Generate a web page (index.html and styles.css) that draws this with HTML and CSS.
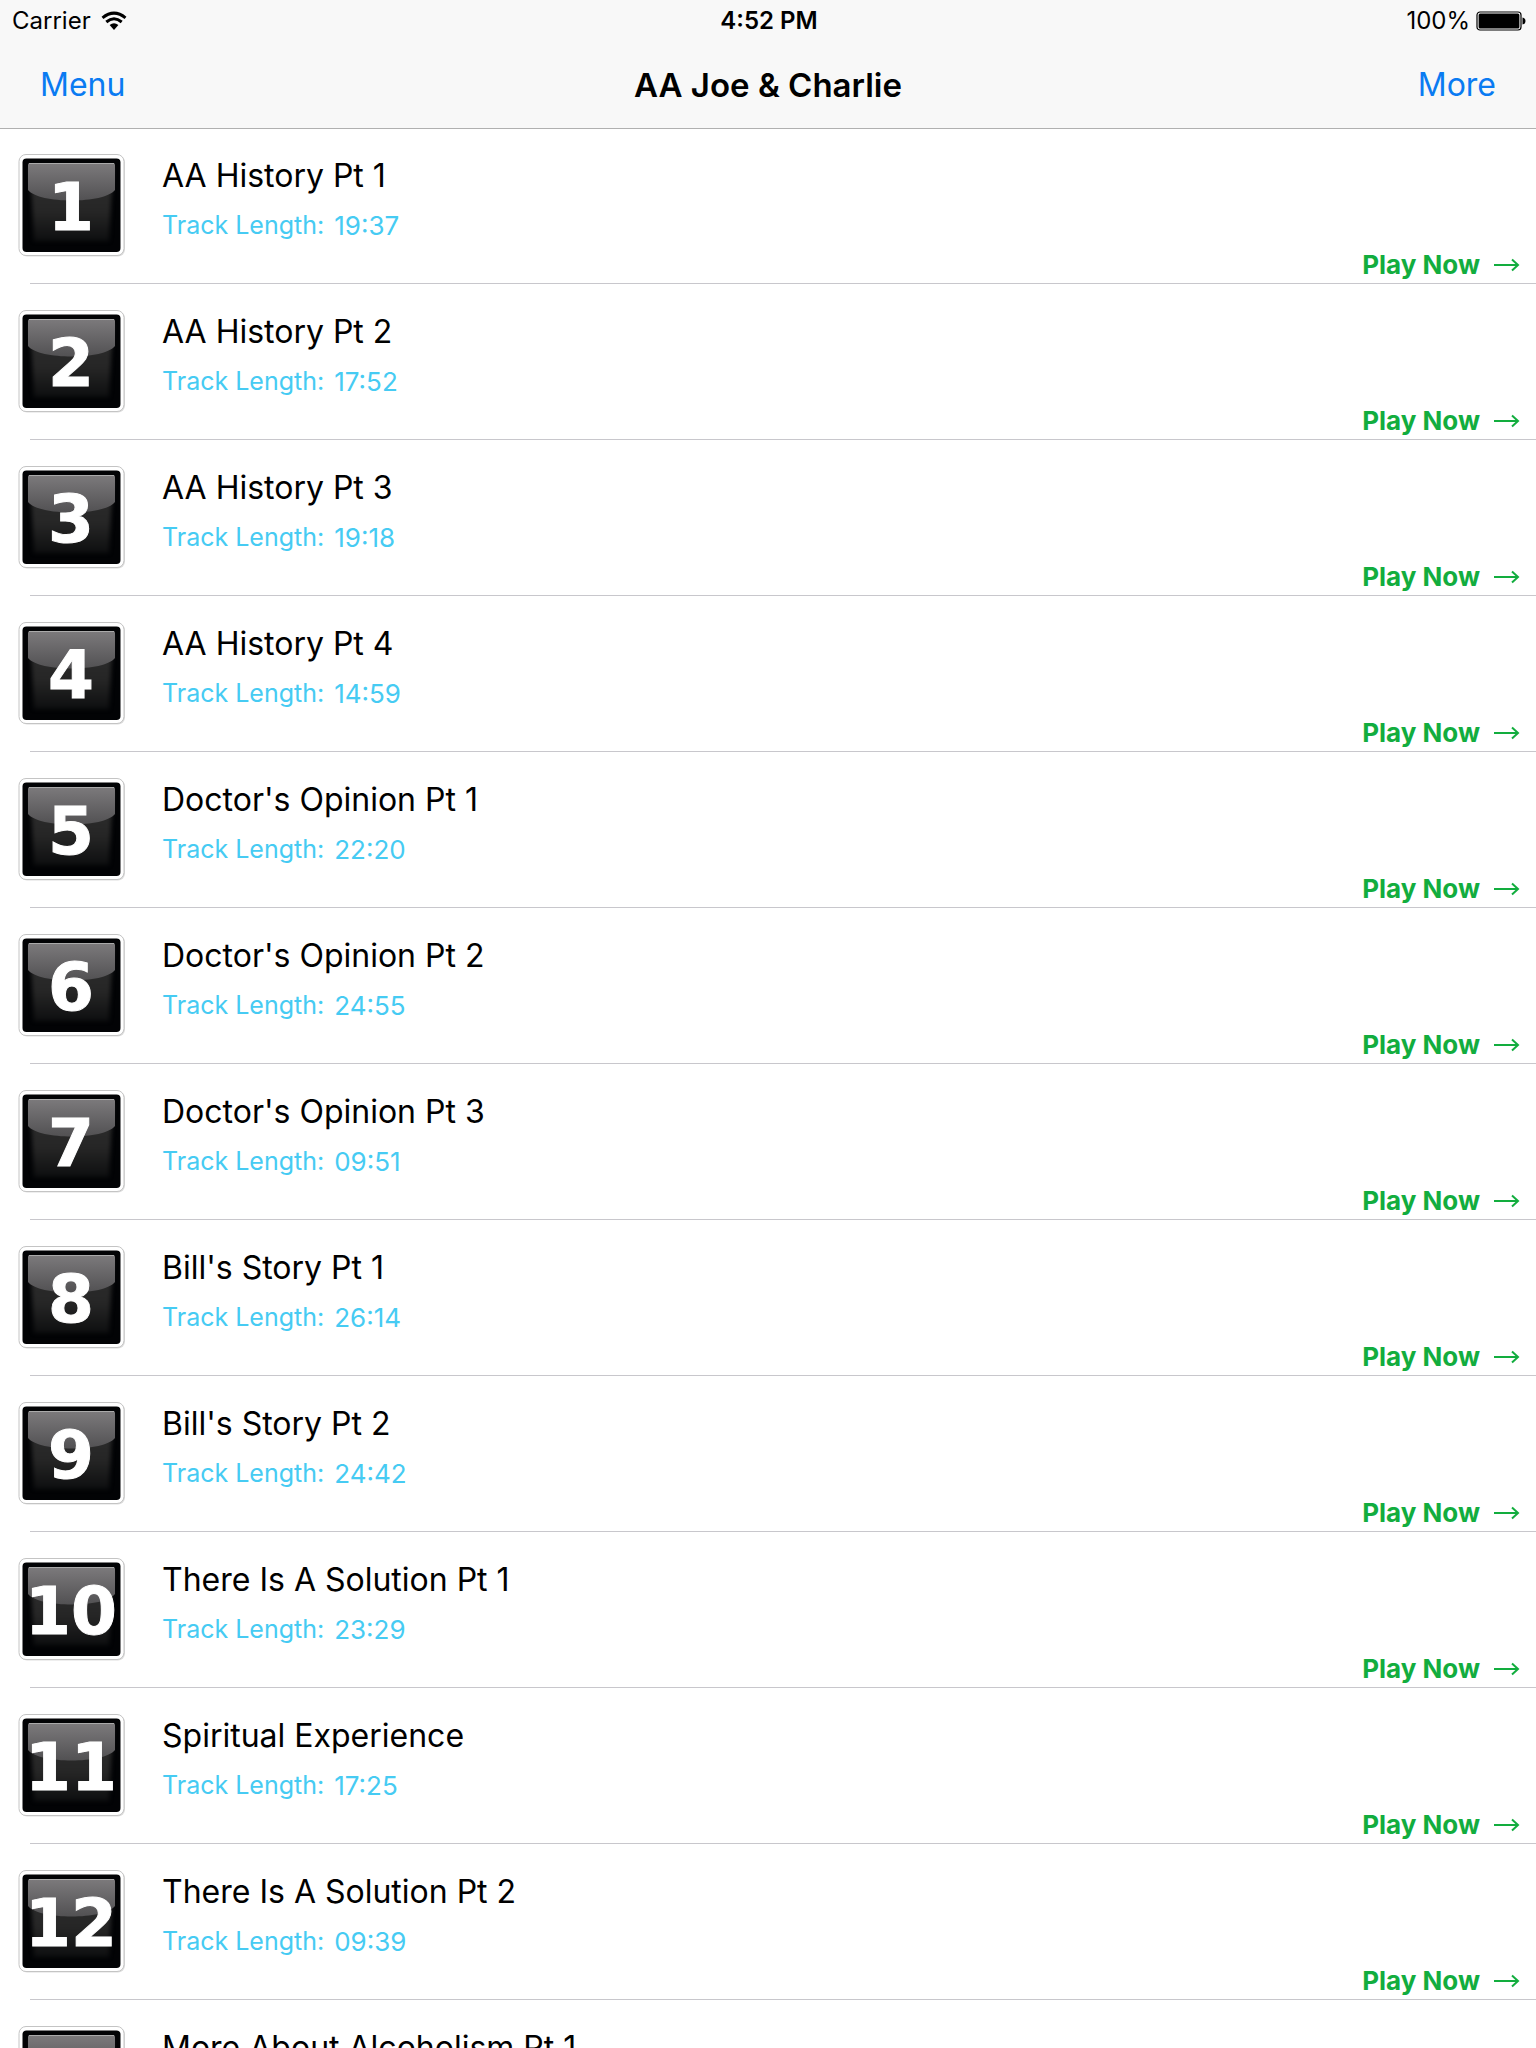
FILE: index.html
```html
<!DOCTYPE html>
<html lang="en">
<head>
  <meta charset="UTF-8">
  <meta name="viewport" content="width=device-width, initial-scale=1.0">
  <title>AA Joe &amp; Charlie</title>
  <link rel="stylesheet" href="styles.css">
</head>
<body>
  <header>
    <div class="status-bar">
      <div class="carrier">
        <span>Carrier</span>
        <svg width="26" height="20" viewBox="0 0 26 20" aria-hidden="true">
          <g fill="none" stroke="#000" stroke-width="3">
            <path d="M1.5 6.8 Q13 -2.6 24.5 6.8"/>
            <path d="M5.3 11 Q13 4.6 20.7 11"/>
          </g>
          <path d="M8.6 14 Q13 10.4 17.4 14 L13 19 Z"/>
        </svg>
      </div>
      <span class="clock">4:52 PM</span>
      <div class="battery">
        <span>100%</span>
        <svg width="50" height="20" viewBox="0 0 50 20" aria-hidden="true">
          <rect x="1" y="1" width="44" height="18" rx="3" fill="#fff" stroke="#000" stroke-width="1.2"/>
          <rect x="2.6" y="2.6" width="40.8" height="14.8" rx="1.5"/>
          <path d="M46.5 6.5 Q49.5 7 49.5 10 Q49.5 13 46.5 13.5 Z"/>
        </svg>
      </div>
    </div>
    <nav class="nav-bar">
      <button class="nav-button">Menu</button>
      <h1>AA Joe &amp; Charlie</h1>
      <button class="nav-button nav-right">More</button>
    </nav>
  </header>

  <svg class="defs" width="0" height="0" aria-hidden="true">
    <defs>
      <linearGradient id="face" x1="0" y1="0" x2="0" y2="1">
        <stop offset="0" stop-color="#303030"/>
        <stop offset="0.6" stop-color="#262626"/>
        <stop offset="1" stop-color="#0e0f10"/>
      </linearGradient>
      <linearGradient id="gloss" x1="0" y1="0" x2="0" y2="1">
        <stop offset="0" stop-color="#7c7a7c"/>
        <stop offset="1" stop-color="#525153"/>
      </linearGradient>
      <filter id="soft" x="-10%" y="-10%" width="120%" height="120%" color-interpolation-filters="sRGB">
        <feGaussianBlur stdDeviation="2"/>
      </filter>
    </defs>
  </svg>

  <main>
    <ul class="track-list" id="track-list"></ul>
  </main>

  <script>
    const trackList = document.getElementById('track-list');

    const tracks = [
      { title: 'AA History Pt 1', length: '19:37' },
      { title: 'AA History Pt 2', length: '17:52' },
      { title: 'AA History Pt 3', length: '19:18' },
      { title: 'AA History Pt 4', length: '14:59' },
      { title: "Doctor's Opinion Pt 1", length: '22:20' },
      { title: "Doctor's Opinion Pt 2", length: '24:55' },
      { title: "Doctor's Opinion Pt 3", length: '09:51' },
      { title: "Bill's Story Pt 1", length: '26:14' },
      { title: "Bill's Story Pt 2", length: '24:42' },
      { title: 'There Is A Solution Pt 1', length: '23:29' },
      { title: 'Spiritual Experience', length: '17:25' },
      { title: 'There Is A Solution Pt 2', length: '09:39' },
      { title: 'More About Alcoholism Pt 1', length: '' }
    ];

    tracks.forEach((track, index) => {
      const number = index + 1;
      const item = document.createElement('li');
      item.className = 'track';
      item.innerHTML = `
        <svg class="badge" width="108" height="104" viewBox="0 0 108 104" role="img" aria-label="Track ${number}">
          <rect x="2" y="2.5" width="105" height="101" rx="7" fill="#ddd"/>
          <rect x="1" y="1.5" width="105" height="101" rx="7" fill="#fff" stroke="#c4c4c4"/>
          <rect x="4.5" y="5.5" width="98" height="93.5" rx="4" fill="#020305"/>
          <path d="M12 14 H95 L91 88 H16 Z" fill="url(#face)" filter="url(#soft)"/>
          <path d="M10 12 Q10 10 12 10 H95 Q97 10 97 12 V37 C86 51 21 51 10 37 Z" fill="url(#gloss)"/>
          <path d="M11 10.5 H96" stroke="#aaa"/>
          <text class="badge-number" x="53" y="77" text-anchor="middle">${number}</text>
        </svg>
        <div class="track-info">
          <h2>${track.title}</h2>
          <p><span>Track Length:</span><span class="time">${track.length}</span></p>
        </div>
        <button class="play-button">
          Play Now
          <svg width="26" height="14" viewBox="0 0 26 14" aria-hidden="true">
            <path d="M0 7 H24 M18 1.5 L24 7 L18 12.5" fill="none" stroke="currentColor" stroke-width="2"/>
          </svg>
        </button>
      `;
      trackList.appendChild(item);
    });
  </script>
</body>
</html>
```
FILE: styles.css
```css
* {
  box-sizing: border-box;
}

body {
  margin: 0;
  height: 100vh;
  display: flex;
  flex-direction: column;
  overflow: hidden;
  font-family: Inter, "Liberation Sans", sans-serif;
  background-color: #fff;
  color: #000;
}

header {
  flex: none;
  background-color: #f8f8f8;
  box-shadow: 0 1px 0 #b0b0b0;
}

.status-bar {
  display: grid;
  grid-template-columns: 1fr auto 1fr;
  align-items: center;
  height: 41px;
  padding: 0 10px 0 12px;
  font-size: 24px;
}

.carrier,
.battery {
  display: flex;
  align-items: center;
  gap: 10px;
}

.battery {
  justify-content: flex-end;
  gap: 6px;
}

.clock {
  font-weight: 600;
}

.nav-bar {
  display: grid;
  grid-template-columns: 1fr auto 1fr;
  align-items: center;
  height: 87px;
  padding: 0 40px;
}

.nav-bar h1 {
  margin: 0;
  font-size: 33px;
  font-weight: 600;
}

button {
  border: none;
  padding: 0;
  background: none;
  font-family: inherit;
  cursor: pointer;
}

.nav-button {
  justify-self: start;
  font-size: 32px;
  color: #0a7bf2;
}

.nav-right {
  justify-self: end;
}

.defs {
  position: absolute;
}

main {
  flex: 1;
  min-height: 0;
  overflow-y: auto;
  scrollbar-width: none;
}

.track-list {
  margin: 0;
  padding: 0;
  list-style: none;
}

.track {
  display: flex;
  height: 156px;
  padding: 0 16px 0 18px;
  background: linear-gradient(#c8c7cc, #c8c7cc) 30px 100% / 100% 1px no-repeat;
}

.badge {
  flex: none;
  margin-top: 25px;
}

.badge-number {
  font-family: "DejaVu Sans", sans-serif;
  font-size: 66px;
  font-weight: bold;
  fill: #fff;
  stroke: #fff;
  stroke-width: 1px;
}

.track-info {
  flex: 1;
  padding: 31px 0 0 36px;
}

.track-info h2 {
  margin: 0 0 16px;
  font-size: 32px;
  font-weight: 400;
  line-height: 34px;
}

.track-info p {
  display: flex;
  gap: 10px;
  margin: 0;
  font-size: 25px;
  line-height: 32px;
  color: #46cbf3;
}

.track-info .time {
  padding-top: 1px;
  font-size: 26px;
}

.play-button {
  display: flex;
  align-items: center;
  align-self: flex-end;
  gap: 14px;
  padding-bottom: 3px;
  font-size: 26px;
  font-weight: 700;
  line-height: 32px;
  color: #12ad3e;
}
```
